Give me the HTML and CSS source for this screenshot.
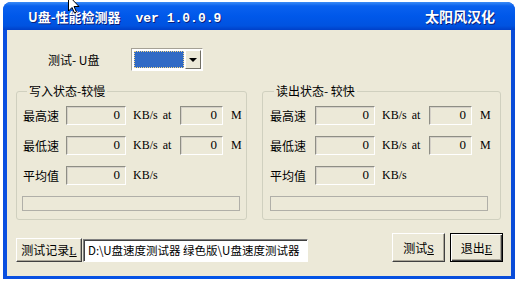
FILE: index.html
```html
<!DOCTYPE html>
<html lang="zh-CN">
<head>
  <meta charset="UTF-8" />
  <title>U盘-性能检测器</title>
  <link rel="stylesheet" href="styles.css">
</head>
<body>
  <div class="window">
    <div class="titlebar">
      <span class="title">U盘-性能检测器 <span class="ver">ver 1.0.0.9</span></span>
      <span class="credit">太阳风汉化</span>
    </div>
    <div class="client">
      <div class="drive-row">
        <span class="drive-label">测试- U盘</span>
        <div class="combo">
          <div class="combo-sel"></div>
          <div class="combo-btn"><span class="arrow"></span></div>
        </div>
      </div>

      <div class="groups">
        <fieldset class="group write">
          <legend>写入状态-较慢</legend>
          <div class="row"><span class="lbl">最高速</span><span class="fld">0</span><span class="unit">KB/s at</span><span class="fld small">0</span><span class="m">M</span></div>
          <div class="row"><span class="lbl">最低速</span><span class="fld">0</span><span class="unit">KB/s at</span><span class="fld small">0</span><span class="m">M</span></div>
          <div class="row"><span class="lbl">平均值</span><span class="fld">0</span><span class="unit">KB/s</span></div>
          <div class="progress"></div>
        </fieldset>
        <fieldset class="group read">
          <legend>读出状态- 较快</legend>
          <div class="row"><span class="lbl">最高速</span><span class="fld">0</span><span class="unit">KB/s at</span><span class="fld small">0</span><span class="m">M</span></div>
          <div class="row"><span class="lbl">最低速</span><span class="fld">0</span><span class="unit">KB/s at</span><span class="fld small">0</span><span class="m">M</span></div>
          <div class="row"><span class="lbl">平均值</span><span class="fld">0</span><span class="unit">KB/s</span></div>
          <div class="progress"></div>
        </fieldset>
      </div>

      <div class="bottom">
        <button class="btn log">测试记录<u>L</u></button>
        <div class="path">D:\U盘速度测试器 绿色版\U盘速度测试器</div>
        <div class="spacer"></div>
        <button class="btn act">测试<u>S</u></button>
        <button class="btn act default">退出<u>E</u></button>
      </div>
    </div>
  </div>

  <svg class="cursor" width="12" height="19" viewBox="0 0 12 19">
    <path d="M0.5 0.5 L0.5 16 L4 12.5 L6.5 18 L8.5 17 L6 11.5 L11 11.5 Z" fill="#fff" stroke="#000" stroke-width="1"/>
  </svg>
</body>
</html>
```

FILE: styles.css
```css
body {
  margin: 0;
  background: #fff;
  font-family: 'Noto Sans CJK SC', sans-serif;
  font-size: 12px;
  color: #000;
}
.window {
  margin: 2px 0 0 3px;
  width: 504px;
  padding: 0 4px 3px 4px;
  background: linear-gradient(90deg, #0a4fe0, #0055ea 50%, #0a4cd8);
  border-radius: 8px 8px 0 0;
}
.titlebar {
  height: 28px;
  margin: 0 -4px;
  padding: 0 20px 0 25px;
  display: flex;
  align-items: center;
  justify-content: space-between;
  border-radius: 8px 8px 0 0;
  background: linear-gradient(#3b8cf6 0, #0a61ee 4px, #0058ea 50%, #0053e0 85%, #0040c8 100%);
  color: #fff;
  font-weight: bold;
  text-shadow: 1px 1px 0 #0a1f7a;
}
.title {
  font-size: 13px;
  padding-top: 1px;
}
.ver {
  font-family: 'Liberation Mono', monospace;
  font-size: 13px;
  margin-left: 12px;
}
.credit {
  font-size: 14px;
}
.client {
  background: #ece9d8;
  height: 246px;
  box-sizing: border-box;
  padding: 19px 8px 0 9px;
  display: flex;
  flex-direction: column;
}
.drive-row {
  display: flex;
  align-items: center;
  height: 21px;
}
.drive-label {
  margin-left: 32px;
  width: 83px;
}
.combo {
  width: 68px;
  height: 19px;
  border: 1px solid;
  border-color: #a5a195 #fff #fff #a5a195;
  background: #fff;
  display: flex;
  padding: 1px;
}
.combo-sel {
  flex: 1;
  background: #316ac5;
  outline: 1px dotted #f5d88a;
  outline-offset: -1px;
  margin: 1px;
}
.combo-btn {
  width: 16px;
  background: #ece9d8;
  border-left: 1px solid #fff;
  border-top: 1px solid #fff;
  border-right: 1px solid #716f64;
  border-bottom: 1px solid #716f64;
  box-sizing: border-box;
  display: flex;
  align-items: center;
  justify-content: center;
}
.arrow {
  width: 0;
  height: 0;
  border-left: 4px solid transparent;
  border-right: 4px solid transparent;
  border-top: 4px solid #000;
}
.groups {
  display: flex;
  gap: 15px;
  margin-top: 14px;
}
.group {
  margin: 0;
  border: 1px solid #d0d0bf;
  border-radius: 3px;
  height: 136px;
  box-sizing: border-box;
  padding: 8px 0 0 6px;
}
.group.write {
  width: 231px;
}
.group.read {
  width: 239px;
  padding-left: 7px;
}
.group legend {
  padding: 0 2px;
  margin-left: 4px;
  line-height: 14px;
}
.row {
  display: flex;
  align-items: center;
  height: 19px;
  margin-bottom: 11px;
}
.lbl {
  width: 43px;
}
.read .lbl {
  width: 45px;
}
.fld {
  width: 60px;
  height: 19px;
  box-sizing: border-box;
  border-top: 1px solid #8e8e85;
  border-left: 1px solid #8e8e85;
  border-right: 1px solid #fff;
  border-bottom: 1px solid #fff;
  box-shadow: inset 1px 1px 0 #d4d0c8;
  text-align: right;
  padding-right: 5px;
  font-family: 'Liberation Serif', serif;
  font-size: 13px;
  line-height: 15px;
}
.fld.small {
  width: 43px;
}
.unit {
  width: 47px;
  padding-left: 7px;
  font-family: 'Liberation Serif', serif;
  font-size: 12px;
  word-spacing: 2px;
}
.m {
  margin-left: 8px;
  font-family: 'Liberation Serif', serif;
  font-size: 12px;
}
.progress {
  width: 218px;
  height: 15px;
  box-sizing: border-box;
  border: 1px solid #b0afa8;
  margin-left: -1px;
  background: #ece9d8;
}
.read .progress {
  margin-left: 0;
}
.bottom {
  display: flex;
  align-items: flex-end;
  margin-top: 13px;
}
.btn {
  font-family: 'Noto Sans CJK SC', sans-serif;
  font-size: 12px;
  background: #ece9d8;
  color: #000;
  border-top: 1px solid #fff;
  border-left: 1px solid #fff;
  border-right: 1px solid #404040;
  border-bottom: 1px solid #404040;
  box-shadow: inset -1px -1px 0 #aca899;
  padding: 0;
  margin: 0;
}
.btn u {
  font-family: 'Liberation Serif', serif;
}
.btn.log {
  width: 66px;
  height: 24px;
}
.path {
  width: 225px;
  height: 23px;
  box-sizing: border-box;
  margin-left: 1px;
  background: #fff;
  border-top: 1px solid #808080;
  border-left: 1px solid #808080;
  border-right: 1px solid #fff;
  border-bottom: 1px solid #fff;
  box-shadow: inset 1px 1px 0 #404040;
  padding: 1px 0 0 4px;
  font-size: 11.5px;
  line-height: 18px;
  white-space: nowrap;
  overflow: hidden;
}
.spacer {
  flex: 1;
}
.btn.act {
  width: 53px;
  height: 29px;
  margin-left: 5px;
}
.btn.default {
  border: 1px solid #000;
  box-shadow: inset 1px 1px 0 #fff, inset -1px -1px 0 #404040, inset -2px -2px 0 #aca899;
}
.cursor {
  position: absolute;
  left: 68px;
  top: -5px;
}
```
